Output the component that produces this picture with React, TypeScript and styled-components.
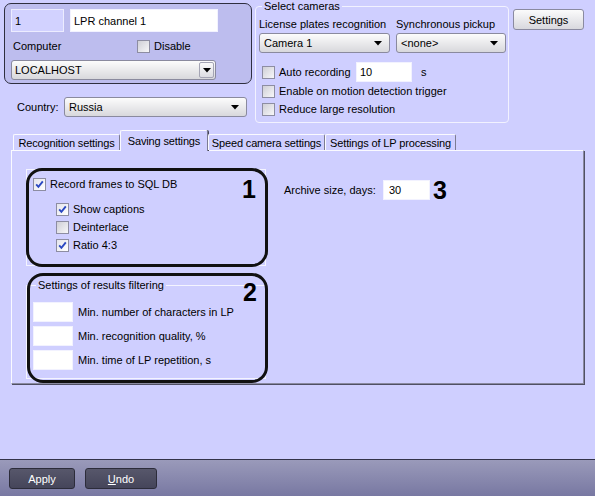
import React from "react";
import styled, { createGlobalStyle } from "styled-components";

const GlobalStyle = createGlobalStyle`
  html, body { margin: 0; padding: 0; }
  body {
    background: #cfcfff;
    font-family: "Liberation Sans", Arial, sans-serif;
    font-size: 11px;
    color: #000;
  }
  * { box-sizing: border-box; }
`;

const Screen = styled.div`
  width: 595px;
  height: 496px;
  display: flex;
  flex-direction: column;
  overflow: hidden;
`;

const Main = styled.div`
  flex: 1;
  display: flex;
  flex-direction: column;
`;

const TopRow = styled.div`
  display: flex;
  align-items: flex-start;
  padding-left: 4px;
  height: 123px;
`;

const LeftCol = styled.div`
  width: 248px;
  margin-top: 3px;
  display: flex;
  flex-direction: column;
`;

const ChannelBox = styled.div`
  height: 81px;
  border: 1px solid #2f2f3f;
  border-radius: 7px;
  background: #bdbdee;
  padding: 5px 0 0 6px;
`;

const FieldRow = styled.div`
  display: flex;
  gap: 6px;
`;

const Field = styled.div<{ $w: number; $h?: number; $dim?: boolean; $pad?: number }>`
  width: ${(p) => p.$w}px;
  height: ${(p) => p.$h ?? 20}px;
  flex: none;
  display: flex;
  align-items: center;
  padding-left: ${(p) => p.$pad ?? 3}px;
  background: ${(p) => (p.$dim ? "#d2d2ff" : "#ffffff")};
  border: 1px solid ${(p) => (p.$dim ? "#ececff" : "#f2f2ff")};
  font-size: 11px;
  white-space: nowrap;
`;

const ComputerRow = styled.div`
  display: flex;
  align-items: center;
  height: 28px;
`;

const ComputerLabel = styled.span`
  flex: 0 0 126px;
  padding-left: 2px;
`;

const CountryRow = styled.div`
  display: flex;
  align-items: center;
  height: 20px;
  margin-top: 13px;
  padding-left: 13px;
`;

const CountryLabel = styled.span`
  flex: 0 0 47px;
`;

const SelectBox = styled.div<{ $w: number; $padLeft?: number }>`
  width: ${(p) => p.$w}px;
  height: 20px;
  flex: none;
  border: 1px solid #8a8a9e;
  border-radius: 3px;
  background: linear-gradient(#fcfcfc, #d8d8dc);
  display: flex;
  align-items: center;
  justify-content: space-between;
  padding: 0 1px 0 ${(p) => p.$padLeft ?? 4}px;
  white-space: nowrap;
`;

const ArrowBox = styled.span<{ $boxed?: boolean }>`
  width: 15px;
  height: 16px;
  display: flex;
  align-items: center;
  justify-content: center;
  border: 1px solid ${(p) => (p.$boxed ? "#a4a4b4" : "transparent")};
  border-radius: 2px;
  background: ${(p) => (p.$boxed ? "linear-gradient(#fafafa, #dcdce2)" : "transparent")};
  margin-right: ${(p) => (p.$boxed ? 0 : 3)}px;
`;

const CameraSet = styled.fieldset`
  width: 254px;
  margin: 0 0 0 3px;
  border: 1px solid #f2f2ff;
  border-radius: 4px;
  padding: 0 0 4px 3px;
  min-inline-size: 0;
`;

const GroupLegend = styled.legend`
  padding: 0 2px;
  margin-left: 3px;
  line-height: 13px;
  font-size: 11px;
`;

const CameraGrid = styled.div`
  display: grid;
  grid-template-columns: 131px 110px;
  column-gap: 6px;
  row-gap: 2px;
  margin-top: 4px;
`;

const GridLabel = styled.span`
  height: 14px;
  line-height: 14px;
  white-space: nowrap;
`;

const OptionRow = styled.div<{ $h?: number; $mt?: number }>`
  display: flex;
  align-items: center;
  height: ${(p) => p.$h ?? 18}px;
  margin-top: ${(p) => p.$mt ?? 0}px;
  padding-left: 3px;
`;

const CheckLabel = styled.label<{ $w?: number }>`
  display: flex;
  align-items: center;
  gap: 4px;
  white-space: nowrap;
  ${(p) => (p.$w ? `width: ${p.$w}px; flex: none;` : "")}
`;

const Unit = styled.span`
  margin-left: 9px;
`;

const Box = styled.span<{ $checked?: boolean }>`
  width: 13px;
  height: 13px;
  flex: none;
  border: 1px solid #8d8da2;
  background: ${(p) =>
    p.$checked
      ? "linear-gradient(135deg, #e4e4ec, #ffffff)"
      : "linear-gradient(135deg, #cfcfd6, #f7f7f9)"};
  display: inline-flex;
  align-items: center;
  justify-content: center;
`;

const LightButton = styled.button<{ $w: number }>`
  width: ${(p) => p.$w}px;
  height: 21px;
  margin: 9px 0 0 4px;
  padding: 0;
  border: 1px solid #8a8aa0;
  border-radius: 3px;
  background: linear-gradient(#fbfbfb, #d8d8de);
  font-family: "Liberation Sans", Arial, sans-serif;
  font-size: 11px;
  color: #000;
`;

const TabStrip = styled.div`
  display: flex;
  align-items: flex-end;
  height: 20px;
  margin: 7px 0 0 11px;
  padding-left: 2px;
  position: relative;
  z-index: 1;
`;

const Tab = styled.div<{ $active?: boolean; $w: number }>`
  width: ${(p) => p.$w}px;
  height: ${(p) => (p.$active ? 21 : 16)}px;
  margin-bottom: ${(p) => (p.$active ? -1 : 0)}px;
  background: #cfcfff;
  border-top: 1px solid #fafaff;
  border-left: 1px solid #fafaff;
  border-right: 1px solid #7c7c92;
  box-shadow: ${(p) => (p.$active ? "1px 0 0 #444458" : "none")};
  border-radius: 2px 2px 0 0;
  display: flex;
  align-items: center;
  justify-content: center;
  padding-top: ${(p) => (p.$active ? 0 : 1)}px;
  white-space: nowrap;
  letter-spacing: -0.15px;
  flex: none;
`;

const Panel = styled.div`
  margin-left: 11px;
  width: 573px;
  height: 234px;
  border-top: 1px solid #fafaff;
  border-left: 1px solid #fafaff;
  border-right: 1px solid #8a8aa0;
  border-bottom: 1px solid #8a8aa0;
  box-shadow: 1px 1px 0 #505064;
  padding: 18px 0 0 14px;
  display: flex;
  align-items: flex-start;
`;

const GroupColumn = styled.div`
  width: 240px;
  display: flex;
  flex-direction: column;
`;

const GroupWrap = styled.div<{ $mt?: number }>`
  position: relative;
  margin-top: ${(p) => p.$mt ?? 0}px;
`;

const PlainGroup = styled.div`
  width: 240px;
  height: 97px;
  border: 1px solid #f4f4ff;
  padding: 5px 0 0 6px;
`;

const SubList = styled.div`
  margin: 7px 0 0 23px;
  display: flex;
  flex-direction: column;
`;

const CheckRow = styled.div`
  display: flex;
  align-items: center;
  height: 18px;
`;

const FilterSet = styled.fieldset`
  width: 240px;
  margin: 0;
  border: 1px solid #f4f4ff;
  padding: 0 0 8px 6px;
  min-inline-size: 0;
`;

const FilterRows = styled.div`
  margin-top: 10px;
  display: flex;
  flex-direction: column;
  gap: 4px;
`;

const FilterRow = styled.div`
  display: flex;
  align-items: center;
  gap: 5px;
  white-space: nowrap;
`;

const Ring = styled.div<{ $t: number; $l: number; $r: number; $b: number }>`
  position: absolute;
  top: ${(p) => p.$t}px;
  left: ${(p) => p.$l}px;
  right: ${(p) => p.$r}px;
  bottom: ${(p) => p.$b}px;
  border: 3px solid #111;
  border-radius: 16px;
  pointer-events: none;
`;

const BigNum = styled.span<{ $t?: number; $r?: number }>`
  font-family: "Liberation Sans", Arial, sans-serif;
  font-weight: bold;
  font-size: 25px;
  line-height: 20px;
  color: #000;
`;

const RingNum = styled(BigNum)`
  position: absolute;
  top: ${(p) => p.$t ?? 8}px;
  right: ${(p) => p.$r ?? 8}px;
`;

const ArchiveRow = styled.div`
  display: flex;
  align-items: center;
  margin: 11px 0 0 18px;
  height: 20px;
`;

const ArchiveLabel = styled.span`
  width: 99px;
  flex: none;
`;

const ArchiveNum = styled(BigNum)`
  margin-left: 3px;
`;

const Footer = styled.div`
  height: 37px;
  flex: none;
  border-top: 1px solid #33334a;
  background: linear-gradient(#9a9aba, #7878a2);
  display: flex;
  align-items: flex-start;
  padding: 8px 0 0 9px;
  gap: 10px;
`;

const DarkButton = styled.button<{ $w: number }>`
  width: ${(p) => p.$w}px;
  height: 21px;
  padding: 0;
  border: 1px solid #2c2c3a;
  border-radius: 3px;
  background: linear-gradient(#57576b, #45455a);
  color: #fff;
  font-family: "Liberation Sans", Arial, sans-serif;
  font-size: 11px;
`;

const Arrow = () => (
  <svg width="8" height="5" viewBox="0 0 8 5">
    <polygon points="0,0 8,0 4,4.5" fill="#000" />
  </svg>
);

const Check = ({ checked }: { checked?: boolean }) => (
  <Box $checked={checked}>
    {checked && (
      <svg width="9" height="9" viewBox="0 0 9 9">
        <path d="M1.2 4.4 L3.4 6.8 L7.8 1.4" stroke="#2a48c2" strokeWidth="1.9" fill="none" />
      </svg>
    )}
  </Box>
);

const Select = ({ w, text, boxed, padLeft }: { w: number; text: string; boxed?: boolean; padLeft?: number }) => (
  <SelectBox $w={w} $padLeft={padLeft}>
    <span>{text}</span>
    <ArrowBox $boxed={boxed}>
      <Arrow />
    </ArrowBox>
  </SelectBox>
);

export default function App() {
  return (
    <>
      <GlobalStyle />
      <Screen>
        <Main>
          <TopRow>
            <LeftCol>
              <ChannelBox>
                <FieldRow>
                  <Field $w={53} $h={23} $dim>1</Field>
                  <Field $w={148} $h={23}>LPR channel 1</Field>
                </FieldRow>
                <ComputerRow>
                  <ComputerLabel>Computer</ComputerLabel>
                  <CheckLabel>
                    <Check />
                    Disable
                  </CheckLabel>
                </ComputerRow>
                <Select w={205} text="LOCALHOST" boxed padLeft={3} />
              </ChannelBox>
              <CountryRow>
                <CountryLabel>Country:</CountryLabel>
                <Select w={183} text="Russia" />
              </CountryRow>
            </LeftCol>

            <CameraSet>
              <GroupLegend>Select cameras</GroupLegend>
              <CameraGrid>
                <GridLabel>License plates recognition</GridLabel>
                <GridLabel>Synchronous pickup</GridLabel>
                <Select w={131} text="Camera 1" />
                <Select w={110} text="<none>" />
              </CameraGrid>
              <OptionRow $h={20} $mt={9}>
                <CheckLabel $w={94}>
                  <Check />
                  Auto recording
                </CheckLabel>
                <Field $w={56}>10</Field>
                <Unit>s</Unit>
              </OptionRow>
              <OptionRow>
                <CheckLabel>
                  <Check />
                  Enable on motion detection trigger
                </CheckLabel>
              </OptionRow>
              <OptionRow>
                <CheckLabel>
                  <Check />
                  Reduce large resolution
                </CheckLabel>
              </OptionRow>
            </CameraSet>

            <LightButton $w={71}>Settings</LightButton>
          </TopRow>

          <TabStrip>
            <Tab $w={107}>Recognition settings</Tab>
            <Tab $w={88} $active>Saving settings</Tab>
            <Tab $w={117}>Speed camera settings</Tab>
            <Tab $w={131}>Settings of LP processing</Tab>
          </TabStrip>

          <Panel>
            <GroupColumn>
              <GroupWrap>
                <PlainGroup>
                  <CheckRow>
                    <CheckLabel>
                      <Check checked />
                      Record frames to SQL DB
                    </CheckLabel>
                  </CheckRow>
                  <SubList>
                    <CheckRow>
                      <CheckLabel>
                        <Check checked />
                        Show captions
                      </CheckLabel>
                    </CheckRow>
                    <CheckRow>
                      <CheckLabel>
                        <Check />
                        Deinterlace
                      </CheckLabel>
                    </CheckRow>
                    <CheckRow>
                      <CheckLabel>
                        <Check checked />
                        Ratio 4:3
                      </CheckLabel>
                    </CheckRow>
                  </SubList>
                </PlainGroup>
                <Ring $t={-1} $l={0} $r={-2} $b={-1}>
                  <RingNum $t={8} $r={9}>1</RingNum>
                </Ring>
              </GroupWrap>

              <GroupWrap $mt={13}>
                <FilterSet>
                  <GroupLegend>Settings of results filtering</GroupLegend>
                  <FilterRows>
                    <FilterRow>
                      <Field $w={40} />
                      Min. number of characters in LP
                    </FilterRow>
                    <FilterRow>
                      <Field $w={40} />
                      Min. recognition quality, %
                    </FilterRow>
                    <FilterRow>
                      <Field $w={40} />
                      Min. time of LP repetition, s
                    </FilterRow>
                  </FilterRows>
                </FilterSet>
                <Ring $t={-6} $l={1} $r={-2} $b={-4}>
                  <RingNum $t={6} $r={8}>2</RingNum>
                </Ring>
              </GroupWrap>
            </GroupColumn>

            <ArchiveRow>
              <ArchiveLabel>Archive size, days:</ArchiveLabel>
              <Field $w={47} $pad={5}>30</Field>
              <ArchiveNum>3</ArchiveNum>
            </ArchiveRow>
          </Panel>
        </Main>

        <Footer>
          <DarkButton $w={66}>Apply</DarkButton>
          <DarkButton $w={72}>
            <u>U</u>ndo
          </DarkButton>
        </Footer>
      </Screen>
    </>
  );
}
